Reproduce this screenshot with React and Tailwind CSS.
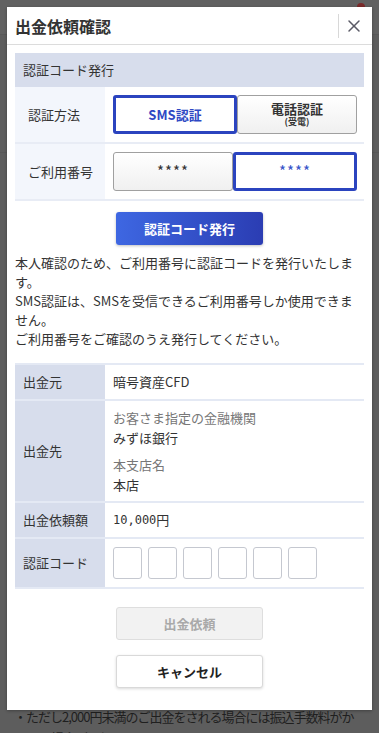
import { X } from 'lucide-react';

const font = { fontFamily: '"Noto Sans CJK JP", "Noto Sans", Roboto, sans-serif' };

function Choice({ active, children }) {
  if (active) {
    return (
      <div className="flex-1 h-[39px] flex flex-col items-center justify-center border-[3px] border-[#2b44bf] rounded-[3px] bg-white text-[#2e48c4] text-[13px] font-bold">
        {children}
      </div>
    );
  }
  return (
    <div className="flex-1 h-[39px] flex flex-col items-center justify-center border border-[#a0a0a0] rounded-[3px] bg-gradient-to-b from-white to-[#f0f0f0] text-[#333] text-[13px] font-bold">
      {children}
    </div>
  );
}

function CodeBox() {
  return <div className="w-[29px] h-[32px] border border-[#c5c8d0] rounded-[3px] bg-white" />;
}

export default function App() {
  return (
    <div className="relative w-[379px] h-[733px] overflow-hidden bg-[#5d5d5d]" style={font}>
      {/* dimmed page behind */}
      <div className="h-[35px] bg-[#616161] border-b border-[#585858]" />
      <div className="h-[118px] border-b border-[#575757]" />
      <div className="absolute right-[14px] top-[3px] w-[8px] h-[8px] rounded-full bg-[#7a2a2a]" />
      <div className="absolute left-[14px] top-[706px] whitespace-nowrap text-[13px] tracking-[-1px] leading-[21px] text-[#1f1f1f]">
        ・ただし2,000円未満のご出金をされる場合には振込手数料がか<br />
        <span className="pl-[13px]">かる場合があります。</span>
      </div>

      {/* modal */}
      <div className="absolute left-[7px] top-[7px] w-[365px] bg-white shadow-[0_1px_3px_rgba(0,0,0,0.3)] pb-[22px]">
        <div className="h-[38px] flex items-center justify-between pl-[8px] pr-[8px] border-b border-[#dcdcdc]">
          <h2 className="text-[16px] font-bold text-[#333]">出金依頼確認</h2>
          <div className="flex items-center h-[24px]">
            <div className="w-px h-[24px] bg-[#d8d8d8] mr-[5px]" />
            <X className="w-[20px] h-[20px] text-[#5a5a66]" strokeWidth={1.8} />
          </div>
        </div>

        <div className="px-[8px] pt-[8px]">
          {/* 認証コード発行 */}
          <div className="h-[34px] bg-[#d7ddec] flex items-center pl-[8px] text-[13px] text-[#333]">
            認証コード発行
          </div>
          <div className="flex border-b-2 border-[#e8ecf5]">
            <div className="w-[90px] bg-[#f3f6fc] flex items-center pl-[13px] text-[13px] text-[#333]">認証方法</div>
            <div className="flex-1 flex pl-[8px] pr-[7px] py-[8px]">
              <Choice active>SMS認証</Choice>
              <Choice>
                <span className="block leading-[13px]">電話認証</span>
                <span className="block mt-[2px] text-[9px] leading-[10px]">(受電)</span>
              </Choice>
            </div>
          </div>
          <div className="flex border-b-2 border-[#e8ecf5]">
            <div className="w-[90px] bg-[#f3f6fc] flex items-center pl-[13px] text-[13px] text-[#333]">ご利用番号</div>
            <div className="flex-1 flex pl-[8px] pr-[7px] py-[8px]">
              <div className="flex-1 h-[39px] flex items-center justify-center border border-[#a0a0a0] rounded-[3px] bg-gradient-to-b from-white to-[#f0f0f0] text-[#333] text-[15px] tracking-[1px]">****</div>
              <div className="flex-1 h-[39px] flex items-center justify-center border-[3px] border-[#2b44bf] rounded-[3px] bg-white text-[#3552c8] text-[15px] tracking-[1px]">****</div>
            </div>
          </div>

          <div className="flex justify-center mt-[11px]">
            <button className="w-[147px] h-[33px] rounded-[3px] bg-gradient-to-r from-[#3e67e2] to-[#2b3db3] text-white text-[13px] font-bold shadow-[0_1px_3px_rgba(0,0,0,0.25)]">
              認証コード発行
            </button>
          </div>

          <p className="mt-[8px] text-[13px] leading-[19px] text-[#333]">
            本人確認のため、ご利用番号に認証コードを発行いたします。<br />
            SMS認証は、SMSを受信できるご利用番号しか使用できません。<br />
            ご利用番号をご確認のうえ発行してください。
          </p>

          {/* 確認表 */}
          <div className="mt-[15px] border-t-2 border-[#e4e9f4] text-[13px] text-[#333]">
            <div className="flex h-[36px] border-b-2 border-[#e4e9f4]">
              <div className="w-[90px] bg-[#d7ddec] flex items-center pl-[8px]">出金元</div>
              <div className="flex-1 flex items-center pl-[8px]">暗号資産CFD</div>
            </div>
            <div className="flex h-[102px] border-b-2 border-[#e4e9f4]">
              <div className="w-[90px] bg-[#d7ddec] flex items-center pl-[8px]">出金先</div>
              <div className="flex-1 pl-[8px] pt-[7px] leading-[20px]">
                <p className="text-[#777]">お客さま指定の金融機関</p>
                <p>みずほ銀行</p>
                <p className="text-[#777] mt-[7px]">本支店名</p>
                <p>本店</p>
              </div>
            </div>
            <div className="flex h-[36px] border-b-2 border-[#e4e9f4]">
              <div className="w-[90px] bg-[#d7ddec] flex items-center pl-[8px]">出金依頼額</div>
              <div className="flex-1 flex items-center pl-[8px]" style={{ fontFamily: '"DejaVu Sans Mono", "Noto Sans CJK JP", monospace' }}>
                <span className="text-[12px]">10,000</span><span style={font}>円</span>
              </div>
            </div>
            <div className="flex h-[50px] border-b-2 border-[#e4e9f4]">
              <div className="w-[90px] bg-[#d7ddec] flex items-center pl-[8px]">認証コード</div>
              <div className="flex-1 flex items-center gap-[6px] pl-[8px]">
                <CodeBox /><CodeBox /><CodeBox /><CodeBox /><CodeBox /><CodeBox />
              </div>
            </div>
          </div>

          <div className="flex flex-col items-center gap-[15px] mt-[18px]">
            <button className="w-[147px] h-[33px] rounded-[3px] bg-[#f2f2f2] border border-[#dedede] text-[#a9a9a9] text-[13px] font-bold">
              出金依頼
            </button>
            <button className="w-[147px] h-[33px] rounded-[3px] bg-white border border-[#d9d9d9] text-[#222] text-[13px] font-bold shadow-[0_1px_3px_rgba(0,0,0,0.15)]">
              キャンセル
            </button>
          </div>
        </div>
      </div>
    </div>
  );
}
